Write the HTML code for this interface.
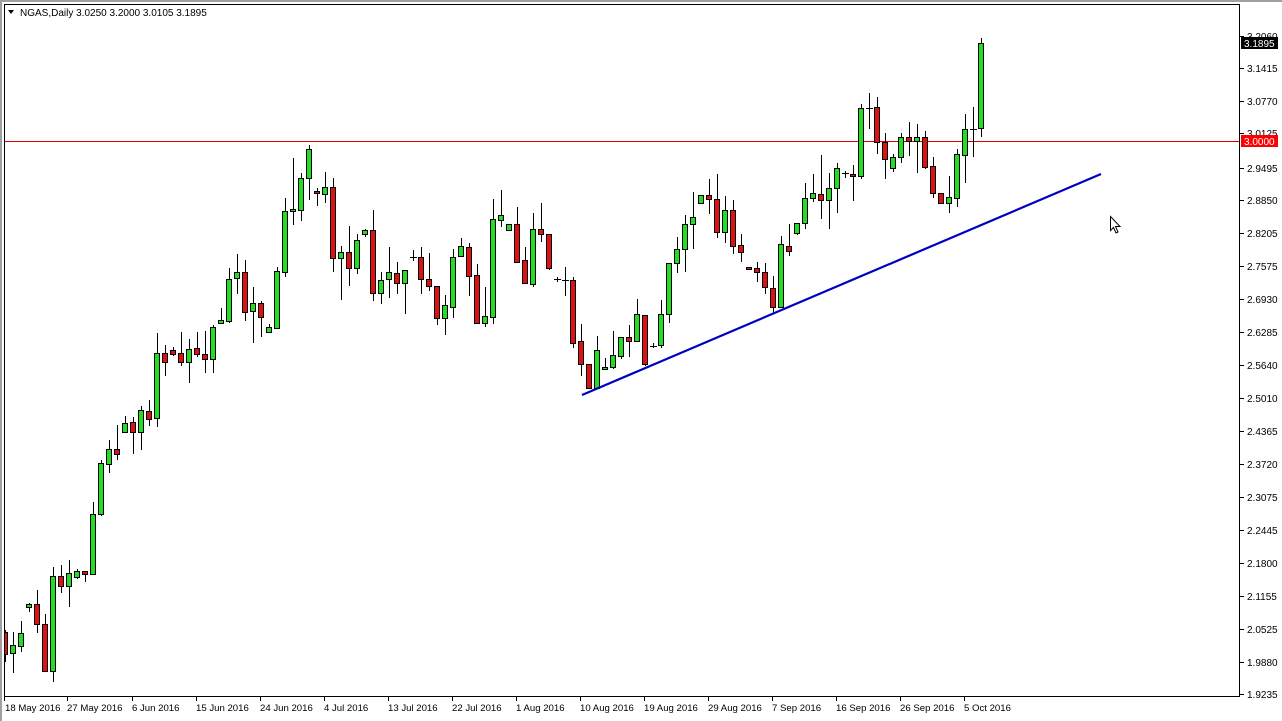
<!DOCTYPE html>
<html><head><meta charset="utf-8"><style>
html,body{margin:0;padding:0;background:#fff;width:1282px;height:721px;overflow:hidden}
svg{display:block}
text{font-family:"Liberation Sans",sans-serif;font-size:10px;fill:#000}
.d text{font-size:9.6px}
</style></head><body>
<svg width="1282" height="721" viewBox="0 0 1282 721" xmlns="http://www.w3.org/2000/svg">
<rect x="0" y="0" width="1282" height="721" fill="#fff"/>
<rect x="0" y="0" width="1282" height="2" fill="#a0a0a0"/>
<rect x="0" y="2" width="2" height="719" fill="#a0a0a0"/>
<defs><clipPath id="c"><rect x="4.5" y="4.5" width="1235" height="692"/></clipPath></defs>
<rect x="4" y="141" width="1236" height="1" fill="#e00000"/>
<g clip-path="url(#c)" shape-rendering="crispEdges">
<path stroke="#000" stroke-width="1" fill="none" d="M5.5 630V662M13.5 632V673M21.5 621V652M29.5 603V612M37.5 590V633M45.5 614V671M53.5 567V682M61.5 565V593M69.5 560V607M77.5 569V579M85.5 571V582M93.5 502V574M101.5 460V516M109.5 440V473M117.5 425V460M125.5 416V432M133.5 417V454M141.5 406V450M149.5 400V426M157.5 333V427M165.5 345V376M173.5 347V356M181.5 332V366M189.5 339V383M197.5 332V357M205.5 331V373M213.5 325V373M221.5 308V323M229.5 268V323M237.5 254V294M245.5 260V321M253.5 287V343M261.5 301V337M269.5 324V333M277.5 267V329M285.5 198V277M293.5 158V225M301.5 173V221M309.5 145V200M317.5 188V206M325.5 172V203M333.5 178V272M341.5 246V300M349.5 226V286M357.5 234V274M365.5 229V237M373.5 210V301M381.5 272V304M389.5 247V298M397.5 262V294M405.5 270V314M413.5 250V261M421.5 247V294M429.5 253V291M437.5 286V325M445.5 295V335M453.5 249V318M461.5 238V256M469.5 243V296M477.5 264V323M485.5 287V327M493.5 199V324M501.5 190V227M509.5 224V230M517.5 207V263M525.5 247V283M533.5 213V287M541.5 203V242M549.5 234V270M557.5 277V282M565.5 267V296M573.5 277V348M581.5 324V376M589.5 364V388M597.5 336V388M605.5 358V369M613.5 331V369M621.5 337V359M629.5 325V357M637.5 299V341M645.5 315V366M653.5 343V348M661.5 300V348M669.5 263V323M677.5 237V273M685.5 215V272M693.5 192V249M701.5 195V203M709.5 179V214M717.5 174V238M725.5 196V243M733.5 200V254M741.5 234V262M749.5 267V270M757.5 262V282M765.5 263V294M773.5 276V313M781.5 236V307M789.5 224V256M797.5 223V235M805.5 183V229M813.5 174V202M821.5 155V219M829.5 173V229M837.5 163V213M845.5 171V178M853.5 165V201M861.5 104V179M869.5 93V129M877.5 97V154M885.5 133V179M893.5 154V172M901.5 133V163M909.5 122V156M917.5 124V173M925.5 131V169M933.5 157V198M941.5 193V203M949.5 176V213M957.5 149V207M965.5 114V183M973.5 107V157M981.5 38V137
M410 257.5H417M554 279.5H561M562 280.5H569M650 346.5H657M842 173.5H849M866 108.5H873M970 129.5H977"/>
<g fill="#22dd22" stroke="#000" stroke-width="1">
<rect x="10.5" y="645.5" width="5" height="8"/><rect x="18.5" y="633.5" width="5" height="13"/><rect x="26.5" y="604.5" width="5" height="3"/><rect x="50.5" y="576.5" width="5" height="95"/><rect x="66.5" y="573.5" width="5" height="13"/><rect x="74.5" y="571.5" width="5" height="6"/><rect x="90.5" y="514.5" width="5" height="60"/><rect x="98.5" y="463.5" width="5" height="51"/><rect x="106.5" y="449.5" width="5" height="15"/><rect x="122.5" y="423.5" width="5" height="9"/><rect x="138.5" y="410.5" width="5" height="22"/><rect x="154.5" y="353.5" width="5" height="65"/><rect x="186.5" y="349.5" width="5" height="13"/><rect x="210.5" y="327.5" width="5" height="32"/><rect x="218.5" y="320.5" width="5" height="3"/><rect x="226.5" y="279.5" width="5" height="42"/><rect x="234.5" y="272.5" width="5" height="6"/><rect x="250.5" y="303.5" width="5" height="8"/><rect x="266.5" y="327.5" width="5" height="5"/><rect x="274.5" y="271.5" width="5" height="57"/><rect x="282.5" y="211.5" width="5" height="61"/><rect x="290.5" y="209.5" width="5" height="2"/><rect x="298.5" y="178.5" width="5" height="32"/><rect x="306.5" y="149.5" width="5" height="29"/><rect x="322.5" y="187.5" width="5" height="7"/><rect x="338.5" y="252.5" width="5" height="6"/><rect x="354.5" y="240.5" width="5" height="28"/><rect x="362.5" y="230.5" width="5" height="4"/><rect x="378.5" y="280.5" width="5" height="13"/><rect x="386.5" y="272.5" width="5" height="7"/><rect x="402.5" y="270.5" width="5" height="13"/><rect x="442.5" y="305.5" width="5" height="13"/><rect x="450.5" y="257.5" width="5" height="50"/><rect x="458.5" y="246.5" width="5" height="10"/><rect x="482.5" y="316.5" width="5" height="7"/><rect x="490.5" y="219.5" width="5" height="98"/><rect x="498.5" y="215.5" width="5" height="5"/><rect x="506.5" y="224.5" width="5" height="6"/><rect x="530.5" y="229.5" width="5" height="55"/><rect x="594.5" y="350.5" width="5" height="38"/><rect x="602.5" y="367.5" width="5" height="2"/><rect x="610.5" y="355.5" width="5" height="12"/><rect x="618.5" y="337.5" width="5" height="19"/><rect x="634.5" y="314.5" width="5" height="27"/><rect x="658.5" y="314.5" width="5" height="31"/><rect x="666.5" y="263.5" width="5" height="51"/><rect x="674.5" y="249.5" width="5" height="14"/><rect x="682.5" y="224.5" width="5" height="25"/><rect x="690.5" y="217.5" width="5" height="7"/><rect x="698.5" y="195.5" width="5" height="8"/><rect x="722.5" y="210.5" width="5" height="22"/><rect x="778.5" y="244.5" width="5" height="63"/><rect x="794.5" y="223.5" width="5" height="10"/><rect x="802.5" y="198.5" width="5" height="25"/><rect x="810.5" y="193.5" width="5" height="5"/><rect x="826.5" y="188.5" width="5" height="12"/><rect x="834.5" y="168.5" width="5" height="20"/><rect x="858.5" y="108.5" width="5" height="68"/><rect x="890.5" y="157.5" width="5" height="11"/><rect x="898.5" y="137.5" width="5" height="20"/><rect x="914.5" y="137.5" width="5" height="4"/><rect x="946.5" y="197.5" width="5" height="6"/><rect x="954.5" y="154.5" width="5" height="44"/><rect x="962.5" y="129.5" width="5" height="26"/><rect x="978.5" y="43.5" width="5" height="85"/>
</g>
<g fill="#dd1111" stroke="#000" stroke-width="1">
<rect x="2.5" y="632.5" width="5" height="22"/><rect x="34.5" y="604.5" width="5" height="20"/><rect x="42.5" y="624.5" width="5" height="47"/><rect x="58.5" y="576.5" width="5" height="10"/><rect x="82.5" y="571.5" width="5" height="3"/><rect x="114.5" y="449.5" width="5" height="5"/><rect x="130.5" y="422.5" width="5" height="10"/><rect x="146.5" y="411.5" width="5" height="8"/><rect x="162.5" y="353.5" width="5" height="9"/><rect x="170.5" y="350.5" width="5" height="4"/><rect x="178.5" y="353.5" width="5" height="9"/><rect x="194.5" y="348.5" width="5" height="6"/><rect x="202.5" y="354.5" width="5" height="5"/><rect x="242.5" y="272.5" width="5" height="40"/><rect x="258.5" y="303.5" width="5" height="14"/><rect x="314.5" y="191.5" width="5" height="2"/><rect x="330.5" y="187.5" width="5" height="71"/><rect x="346.5" y="252.5" width="5" height="16"/><rect x="370.5" y="230.5" width="5" height="63"/><rect x="394.5" y="273.5" width="5" height="10"/><rect x="418.5" y="257.5" width="5" height="22"/><rect x="426.5" y="279.5" width="5" height="7"/><rect x="434.5" y="286.5" width="5" height="32"/><rect x="466.5" y="247.5" width="5" height="29"/><rect x="474.5" y="275.5" width="5" height="48"/><rect x="514.5" y="224.5" width="5" height="38"/><rect x="522.5" y="260.5" width="5" height="23"/><rect x="538.5" y="229.5" width="5" height="5"/><rect x="546.5" y="234.5" width="5" height="34"/><rect x="570.5" y="280.5" width="5" height="63"/><rect x="578.5" y="341.5" width="5" height="23"/><rect x="586.5" y="364.5" width="5" height="24"/><rect x="626.5" y="337.5" width="5" height="4"/><rect x="642.5" y="315.5" width="5" height="49"/><rect x="706.5" y="195.5" width="5" height="4"/><rect x="714.5" y="199.5" width="5" height="33"/><rect x="730.5" y="210.5" width="5" height="36"/><rect x="738.5" y="245.5" width="5" height="7"/><rect x="746.5" y="267.5" width="5" height="2"/><rect x="754.5" y="268.5" width="5" height="4"/><rect x="762.5" y="272.5" width="5" height="15"/><rect x="770.5" y="288.5" width="5" height="19"/><rect x="786.5" y="246.5" width="5" height="5"/><rect x="818.5" y="194.5" width="5" height="6"/><rect x="850.5" y="174.5" width="5" height="2"/><rect x="874.5" y="107.5" width="5" height="35"/><rect x="882.5" y="142.5" width="5" height="17"/><rect x="906.5" y="137.5" width="5" height="4"/><rect x="922.5" y="137.5" width="5" height="30"/><rect x="930.5" y="166.5" width="5" height="27"/><rect x="938.5" y="193.5" width="5" height="10"/>
</g>
</g>
<line x1="582" y1="395" x2="1101" y2="174" stroke="#0000c0" stroke-width="2.2"/>
<path d="M1110.5 216.5V230.5L1113.5 227.5L1116 233L1118 232L1115.5 226.5H1120Z" fill="#fff" stroke="#000" stroke-width="1"/>
<rect x="4.5" y="4.5" width="1235" height="692" fill="none" stroke="#000" stroke-width="1" shape-rendering="crispEdges"/>
<g stroke="#000" stroke-width="1" shape-rendering="crispEdges">
<path d="M1240 36.5h4M1240 68.5h4M1240 101.5h4M1240 133.5h4M1240 168.5h4M1240 200.5h4M1240 233.5h4M1240 266.5h4M1240 299.5h4M1240 332.5h4M1240 365.5h4M1240 398.5h4M1240 431.5h4M1240 464.5h4M1240 497.5h4M1240 530.5h4M1240 563.5h4M1240 596.5h4M1240 629.5h4M1240 662.5h4M1240 694.5h4"/>
<path d="M4.5 697v4M67.5 697v4M132.5 697v4M196.5 697v4M260.5 697v4M324.5 697v4M388.5 697v4M452.5 697v4M516.5 697v4M580.5 697v4M644.5 697v4M708.5 697v4M772.5 697v4M836.5 697v4M900.5 697v4M964.5 697v4"/>
</g>
<g>
<text x="1247" y="40">3.2060</text><text x="1247" y="72">3.1415</text><text x="1247" y="105">3.0770</text><text x="1247" y="137">3.0125</text><text x="1247" y="172">2.9495</text><text x="1247" y="204">2.8850</text><text x="1247" y="237">2.8205</text><text x="1247" y="270">2.7575</text><text x="1247" y="303">2.6930</text><text x="1247" y="336">2.6285</text><text x="1247" y="369">2.5640</text><text x="1247" y="402">2.5010</text><text x="1247" y="435">2.4365</text><text x="1247" y="468">2.3720</text><text x="1247" y="501">2.3075</text><text x="1247" y="534">2.2445</text><text x="1247" y="567">2.1800</text><text x="1247" y="600">2.1155</text><text x="1247" y="633">2.0525</text><text x="1247" y="666">1.9880</text><text x="1247" y="698">1.9235</text>
</g>
<rect x="1241" y="37" width="37" height="12" fill="#000"/>
<text x="1244" y="47" style="fill:#fff">3.1895</text>
<rect x="1241" y="135" width="37" height="12" fill="#ff0000"/>
<text x="1244" y="145" style="fill:#fff">3.0000</text>
<g class="d">
<text x="5" y="711">18 May 2016</text><text x="67" y="711">27 May 2016</text><text x="132" y="711">6 Jun 2016</text><text x="196" y="711">15 Jun 2016</text><text x="260" y="711">24 Jun 2016</text><text x="324" y="711">4 Jul 2016</text><text x="388" y="711">13 Jul 2016</text><text x="452" y="711">22 Jul 2016</text><text x="516" y="711">1 Aug 2016</text><text x="580" y="711">10 Aug 2016</text><text x="644" y="711">19 Aug 2016</text><text x="708" y="711">29 Aug 2016</text><text x="772" y="711">7 Sep 2016</text><text x="836" y="711">16 Sep 2016</text><text x="900" y="711">26 Sep 2016</text><text x="964" y="711">5 Oct 2016</text>
</g>
<path d="M8 10H14L11 14Z" fill="#000"/>
<text x="20" y="16">NGAS,Daily  3.0250 3.2000 3.0105 3.1895</text>
</svg>
</body></html>
